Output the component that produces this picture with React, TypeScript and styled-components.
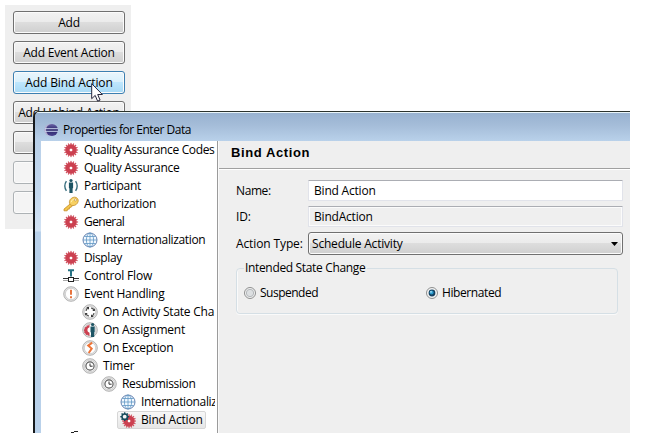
import React from 'react';
import styled, { createGlobalStyle, css } from 'styled-components';

const GlobalStyle = createGlobalStyle`
  body { margin: 0; background: #fff; overflow: hidden; }
  * { box-sizing: border-box; }
`;

const Desktop = styled.main`
  position: relative;
  width: 645px;
  height: 440px;
  background: #fff;
  color: #000;
  font: 12px/18px "Open Sans", "Noto Sans", sans-serif;
  letter-spacing: -0.2px;
  white-space: nowrap;
  overflow: hidden;
`;

const Label = styled.span<{ $track?: number }>`
  letter-spacing: ${p => p.$track ?? -0.2}px;
`;

const ButtonPanel = styled.aside`
  position: absolute;
  left: 5px;
  top: 5px;
  width: 126px;
  height: 224px;
  padding: 6px 6px 0 8px;
  display: flex;
  flex-direction: column;
  gap: 7px;
  background: #efefef;
`;

const PushButton = styled.button<{ $state?: 'hot' | 'disabled' }>`
  height: 23px;
  flex: none;
  padding: 1px 0 0;
  border: 1px solid #707070;
  border-radius: 3px;
  color: #000;
  font: inherit;
  line-height: 20px;
  background: linear-gradient(#f2f2f2, #ebebeb 48%, #dddddd 50%, #cfcfcf);
  box-shadow: inset 0 0 0 1px #fbfbfb;
  ${p => p.$state === 'hot' && css`
    border-color: #3c7fb1;
    background: linear-gradient(#eaf6fd, #d9f0fc 48%, #bee6fd 50%, #a7d9f5);
  `}
  ${p => p.$state === 'disabled' && css`
    border-color: #adb2b5;
    background: #f4f4f4;
  `}
`;

const Cursor = styled.svg`
  position: absolute;
  left: 91px;
  top: 83px;
`;

const Dialog = styled.section`
  position: absolute;
  left: 33px;
  top: 111px;
  width: 597px;
  height: 322px;
  display: flex;
  flex-direction: column;
  border-top: 1px solid #2b332d;
  border-left: 2px solid #16191c;
  border-top-left-radius: 6px;
  background: linear-gradient(#b4cce6, #c3d8ee 80px, #d3e3f4 119px, #b9d1ea 120px);
  overflow: hidden;
`;

const TitleBar = styled.header`
  height: 29px;
  flex: none;
  display: flex;
  align-items: center;
  gap: 4px;
  padding: 6px 0 0 9px;
  border-top: 1px solid #e8f4f8;
  background: linear-gradient(#98b2d0, #a5bdd9 45%, #b9d1ea);
`;

const DialogBody = styled.div`
  flex: 1;
  display: flex;
  margin-left: 6px;
  min-height: 0;
`;

const Tree = styled.ul`
  width: 176px;
  flex: none;
  margin: 0;
  padding: 0 2px 0 0;
  list-style: none;
  background: #fff;
  overflow: hidden;
`;

const TreeRow = styled.li<{ $level: number }>`
  height: 18px;
  display: flex;
  align-items: center;
  margin-left: ${p => 19 + p.$level * 19}px;
  overflow: hidden;
`;

const TreeItem = styled.div<{ $selected?: boolean }>`
  height: 18px;
  display: flex;
  align-items: center;
  gap: 5px;
  flex: none;
  padding: 0 3px 0 2px;
  border: 1px solid transparent;
  border-radius: 2px;
  svg { display: block; flex: none; }
  ${p => p.$selected && css`
    width: 89px;
    border-color: #d6d6d6;
    background: linear-gradient(#f8f8f8, #e6e6e6);
  `}
`;

const Page = styled.section`
  flex: 1;
  min-width: 0;
  border-left: 1px solid #9b9b9b;
  box-shadow: inset 1px 0 #fafafa;
  background: #efefef;
`;

const PageTitle = styled.h1`
  height: 28px;
  margin: 0 0 0 1px;
  padding: 2px 0 0 12px;
  border-bottom: 1px solid #a0a0a0;
  box-shadow: 0 1px #fff;
  font: bold 13px/20px "Liberation Sans", Arial, sans-serif;
`;

const Form = styled.div`
  display: grid;
  grid-template-columns: 72px 315px;
  grid-template-rows: 21px 21px 23px;
  row-gap: 5px;
  align-items: center;
  padding: 11px 0 0 18px;
`;

const TextField = styled.div<{ $readOnly?: boolean }>`
  height: 21px;
  padding: 0 5px 0;
  line-height: 19px;
  border: 1px solid #e1e3ea;
  border-top-color: #abadb3;
  border-radius: 1px;
  background: ${p => (p.$readOnly ? '#efefef' : '#fff')};
  box-shadow: inset 0 0 0 1px ${p => (p.$readOnly ? '#fbfbfb' : '#fff')};
`;

const Combo = styled.div`
  height: 23px;
  display: flex;
  align-items: center;
  justify-content: space-between;
  padding: 0 4px 0 3px;
  border: 1px solid #707070;
  border-radius: 3px;
  background: linear-gradient(#f2f2f2, #ebebeb 48%, #dddddd 50%, #cfcfcf);
  box-shadow: inset 0 0 0 1px #fbfbfb;
`;

const Group = styled.fieldset`
  width: 382px;
  height: 55px;
  margin: 4px 0 0 18px;
  padding: 7px 0 0 7px;
  display: grid;
  grid-template-columns: 182px 1fr;
  align-items: start;
  border: 1px solid #d5dfe5;
  border-radius: 4px;
  box-shadow: 0 1px #fafafa, inset 1px 0 #fafafa;
  legend { padding: 0 2px 0 1px; height: 18px; }
`;

const Radio = styled.label`
  display: flex;
  align-items: center;
  gap: 4px;
  height: 18px;
`;

const teeth = Array.from({ length: 16 }, (_, i) => i * 22.5);

const Gear = ({ x = 0, y = 0, s = 1 }: { x?: number; y?: number; s?: number }) => (
  <g transform={`translate(${x} ${y}) scale(${s})`}>
    {teeth.map(a => (
      <rect key={a} x="7.4" y=".9" width="1.2" height="3.5" fill="#d05562" transform={`rotate(${a} 8 8)`} />
    ))}
    <circle cx="8" cy="8" r="3.5" fill="none" stroke="#cc4050" strokeWidth="4.4" />
    <circle cx="8" cy="8" r="1.3" fill="#fff" />
  </g>
);

const Ring = () => (
  <>
    <circle cx="8" cy="8" r="7.3" fill="#e4e4e4" stroke="#acacac" strokeWidth=".9" />
    <circle cx="8" cy="8" r="5.7" fill="#fff" stroke="#c8c8c8" strokeWidth=".8" />
  </>
);

const Person = ({ x = 8 }: { x?: number }) => (
  <g transform={`translate(${x - 8} 0)`} fill="#1d5565">
    <circle cx="8" cy="2.5" r="1.6" />
    <path d="M5.9 4.5h4.2v5.7H9.6V15H6.4v-4.8h-.5z" />
  </g>
);

const drawings = {
  gear: <Gear />,
  person: (
    <>
      <Person />
      <path d="M3.4 3.2Q.2 8 3.4 12.8M12.6 3.2Q15.8 8 12.6 12.8" fill="none" stroke="#3b7080" strokeWidth="1.4" />
    </>
  ),
  key: (
    <>
      <path d="M8 7.2 1 13.1v1.7h3.2l.4-1.6 1.7-.1.2-1.7 1.7-.2 1.6-2z" fill="#f4c64b" stroke="#c38a26" strokeWidth=".8" />
      <ellipse cx="10.8" cy="5.4" rx="4.7" ry="3.9" transform="rotate(-38 10.8 5.4)" fill="#f7d062" stroke="#c9983a" strokeWidth=".8" />
      <path d="M8.1 6.2q.6-2.9 3.5-3.4" fill="none" stroke="#fff0b0" />
      <circle cx="12.4" cy="3.9" r="1.1" fill="#fff" stroke="#b98a30" strokeWidth=".6" />
    </>
  ),
  globe: (
    <g fill="none" stroke="#5f97c4" strokeWidth=".8">
      <circle cx="8" cy="8" r="7" fill="#f1f8ff" stroke="#44659a" />
      <ellipse cx="8" cy="8" rx="3.6" ry="7" />
      <path d="M8 1v14M1 8h14M2.3 4.5h11.4M2.3 11.5h11.4" />
    </g>
  ),
  flow: (
    <>
      <path d="M5 2.2h6M8 2.2V8.5" stroke="#287384" strokeWidth="2" />
      <path d="M0 10.5h16" stroke="#333" />
      <path d="M0 12.5h16" stroke="#aaa" />
      <rect x="5.5" y="9.5" width="5" height="4" fill="#fff" stroke="#222" />
    </>
  ),
  event: (
    <>
      <Ring />
      <path d="M8 3.7v5M8 10.2v2" stroke="#e5652a" strokeWidth="1.8" />
    </>
  ),
  activity: (
    <>
      <Ring />
      <path d="M4 6.8q.4-1.8 1.8-2.8M9.2 4q1.8.4 2.8 1.8M12 9.2q-.4 1.8-1.8 2.8M6.8 12Q5 11.6 4 10.2" fill="none" stroke="#555" strokeWidth="1.3" />
      <path d="M4.4 3.1h2.6v2.6zM12.9 4.4v2.6h-2.6zM11.6 12.9H9v-2.6zM3.1 11.6V9h2.6z" fill="#333" />
    </>
  ),
  assignment: (
    <>
      <Ring />
      <path d="M7.5 2.2v3A2.9 2.9 0 0 0 7.5 10.8v3l-1.4-.2-.7-.8-1.4.2-.5-1.5-1.3-.7.3-1.4-.8-1.3 1-1.1.1-1.7 1.4-.4.7-1.5 1.4.1z" fill="#cc4050" />
      <Person x={10.6} />
    </>
  ),
  exception: (
    <>
      <Ring />
      <path d="M10.2 2.6 6.2 5.6 9.7 8.6 6.7 13" fill="none" stroke="#ed7437" strokeWidth="2" />
    </>
  ),
  timer: (
    <>
      <Ring />
      <circle cx="8" cy="8" r="4.1" fill="#fff" stroke="#5a5a5a" strokeWidth="1.2" />
      <path d="M8 5.5V8.2h2.6" fill="none" stroke="#333" />
    </>
  ),
  bind: (
    <>
      <Gear x={1.2} y={1.2} s={0.98} />
      <g fill="#174b5b">
        {[0, 45, 90, 135].map(a => (
          <rect key={a} x="4" y=".3" width="1.4" height="8.8" transform={`rotate(${a} 4.7 4.7)`} />
        ))}
        <circle cx="4.7" cy="4.7" r="3.4" />
      </g>
      <circle cx="4.7" cy="4.7" r="1.9" fill="#f5f5f5" />
    </>
  ),
};

type IconName = keyof typeof drawings;
const Icon = ({ name }: { name: IconName }) => (
  <svg width="16" height="16" viewBox="0 0 16 16">{drawings[name]}</svg>
);

const rows: { text: string; icon: IconName; level: number; track?: number; selected?: boolean }[] = [
  { text: 'Quality Assurance Codes', icon: 'gear', level: 0, track: -0.34 },
  { text: 'Quality Assurance', icon: 'gear', level: 0, track: -0.31 },
  { text: 'Participant', icon: 'person', level: 0, track: -0.33 },
  { text: 'Authorization', icon: 'key', level: 0, track: -0.3 },
  { text: 'General', icon: 'gear', level: 0, track: -0.55 },
  { text: 'Internationalization', icon: 'globe', level: 1, track: -0.36 },
  { text: 'Display', icon: 'gear', level: 0, track: -0.38 },
  { text: 'Control Flow', icon: 'flow', level: 0 },
  { text: 'Event Handling', icon: 'event', level: 0, track: -0.28 },
  { text: 'On Activity State Cha', icon: 'activity', level: 1, track: -0.24 },
  { text: 'On Assignment', icon: 'assignment', level: 1, track: -0.25 },
  { text: 'On Exception', icon: 'exception', level: 1, track: -0.36 },
  { text: 'Timer', icon: 'timer', level: 1 },
  { text: 'Resubmission', icon: 'timer', level: 2, track: -0.36 },
  { text: 'Internationalization', icon: 'globe', level: 3, track: -0.36 },
  { text: 'Bind Action', icon: 'bind', level: 3, selected: true },
];

const RadioMark = ({ checked }: { checked?: boolean }) => (
  <svg width="12" height="12" viewBox="0 0 12 12">
    <circle cx="6" cy="6" r="5.5" fill="#f4f4f4" stroke="#8e8f8f" />
    {checked ? (
      <>
        <circle cx="6" cy="6" r="3.4" fill="#14405f" />
        <circle cx="5.6" cy="5.4" r="2" fill="#2b9bce" />
        <circle cx="5" cy="4.8" r=".9" fill="#b5e4f5" />
      </>
    ) : (
      <circle cx="6" cy="6" r="3.7" fill="#dcdfe1" stroke="#b4b8bb" />
    )}
  </svg>
);

const EclipseLogo = () => (
  <svg width="15" height="14" viewBox="0 0 15 14">
    <defs>
      <linearGradient id="sphere" x1="0" y1="0" x2="0" y2="1">
        <stop offset="0" stopColor="#6c65a8" />
        <stop offset=".5" stopColor="#2a2468" />
        <stop offset="1" stopColor="#4b4591" />
      </linearGradient>
    </defs>
    <circle cx="6.4" cy="7" r="6" fill="#b3a9cd" />
    <circle cx="8" cy="7" r="6" fill="url(#sphere)" />
    <path d="M1 5.7h13M1 8.3h13" stroke="#c9d6ee" strokeWidth="1" />
  </svg>
);

export default function App() {
  return (
    <Desktop>
      <GlobalStyle />
      <ButtonPanel>
        <PushButton><Label>Add</Label></PushButton>
        <PushButton><Label>Add Event Action</Label></PushButton>
        <PushButton $state="hot"><Label $track={-0.13}>Add Bind Action</Label></PushButton>
        <PushButton><Label>Add Unbind Action</Label></PushButton>
        <PushButton />
        <PushButton $state="disabled" />
        <PushButton $state="disabled" />
      </ButtonPanel>
      <Cursor width="13" height="20" viewBox="0 0 13 20">
        <path d="M.7.7v15l3.5-3.3 2.4 5.7 2.5-1-2.4-5.6h4.7z" fill="#fff" stroke="#26263c" />
      </Cursor>
      <Dialog>
        <TitleBar>
          <EclipseLogo />
          <Label $track={-0.48}>Properties for Enter Data</Label>
        </TitleBar>
        <DialogBody>
          <Tree>
            {rows.map((r, i) => (
              <TreeRow key={i} $level={r.level}>
                <TreeItem $selected={r.selected}>
                  <Icon name={r.icon} />
                  <Label $track={r.track}>{r.text}</Label>
                </TreeItem>
              </TreeRow>
            ))}
            <TreeRow $level={0}>
              <svg width="20" height="18" viewBox="0 0 20 18"><path d="M11 3.5h3M14 2.5h4" fill="none" stroke="#222" /></svg>
            </TreeRow>
          </Tree>
          <Page>
            <PageTitle><Label $track={0.6}>Bind Action</Label></PageTitle>
            <Form>
              <Label $track={-0.4}>Name:</Label>
              <TextField><Label>Bind Action</Label></TextField>
              <Label>ID:</Label>
              <TextField $readOnly><Label>BindAction</Label></TextField>
              <Label $track={-0.12}>Action Type:</Label>
              <Combo>
                <Label>Schedule Activity</Label>
                <svg width="7" height="4" viewBox="0 0 7 4"><path d="M0 0h7L3.5 4z" /></svg>
              </Combo>
            </Form>
            <Group>
              <legend><Label $track={-0.34}>Intended State Change</Label></legend>
              <Radio><RadioMark /><Label $track={-0.5}>Suspended</Label></Radio>
              <Radio><RadioMark checked /><Label $track={-0.4}>Hibernated</Label></Radio>
            </Group>
          </Page>
        </DialogBody>
      </Dialog>
    </Desktop>
  );
}
